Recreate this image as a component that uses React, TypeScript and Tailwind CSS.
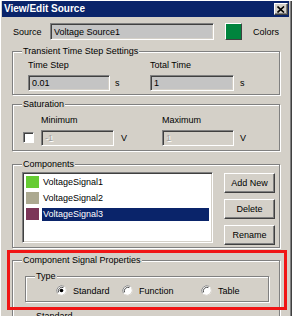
import React from "react";

const sunken =
  "border border-t-[#808080] border-l-[#808080] border-b-white border-r-white shadow-[inset_1px_1px_0_#404040,inset_-1px_-1px_0_#d4d0c8]";
const raised =
  "border border-t-white border-l-white border-b-[#404040] border-r-[#404040] shadow-[inset_-1px_-1px_0_#808080,inset_1px_1px_0_#d4d0c8]";

function Group({
  title,
  className,
  children,
}: {
  title: string;
  className?: string;
  children?: React.ReactNode;
}) {
  return (
    <div
      className={`relative border border-[#808080] shadow-[inset_1px_1px_0_#fff,1px_1px_0_#fff] ${className ?? ""}`}
    >
      <span className="absolute -top-[7px] left-[9px] bg-[#d4d0c8] px-[1px] leading-[12px]">
        {title}
      </span>
      {children}
    </div>
  );
}

function Field({
  value,
  width,
  disabled,
}: {
  value: string;
  width: string;
  disabled?: boolean;
}) {
  return (
    <div
      className={`${sunken} ${width} flex h-[16px] items-center pl-[3px] ${
        disabled
          ? "bg-[#d4d0c8] text-[#a0a0a0] [text-shadow:1px_1px_0_#fff]"
          : "bg-[#c4c4c4] text-black"
      }`}
    >
      {value}
    </div>
  );
}

function Radio({ label, checked }: { label: string; checked?: boolean }) {
  return (
    <div className="flex items-center gap-[6px]">
      <svg width="11" height="11" viewBox="0 0 12 12">
        <circle cx="6" cy="6" r="5.5" fill="#fff" />
        <path d="M1.5 9 A5.5 5.5 0 0 1 9 1.5" stroke="#808080" strokeWidth="1" fill="none" />
        <path d="M2.8 8 A4 4 0 0 1 8 2.8" stroke="#404040" strokeWidth="1" fill="none" />
        <path d="M3 10.5 A5.5 5.5 0 0 0 10.5 3" stroke="#d4d0c8" strokeWidth="1" fill="none" />
        {checked && <circle cx="6" cy="6" r="2" fill="#000" />}
      </svg>
      <span>{label}</span>
    </div>
  );
}

function Button({ label }: { label: string }) {
  return (
    <div
      className={`${raised} flex h-[20px] w-[51px] items-center justify-center bg-[#d4d0c8]`}
    >
      {label}
    </div>
  );
}

export default function App() {
  const signals = [
    { name: "VoltageSignal1", color: "bg-[#66cc33]", selected: false },
    { name: "VoltageSignal2", color: "bg-[#aca990]", selected: false },
    { name: "VoltageSignal3", color: "bg-[#7c3658]", selected: true },
  ];

  return (
    <div className="relative h-[316px] w-[292px] overflow-hidden bg-[#d4d0c8] pl-[2px] pr-[3px] pt-[1px] font-['Liberation_Sans',Arial,sans-serif] text-[9px] leading-[12px] text-black shadow-[inset_1px_1px_0_#fff,inset_-1px_0_0_#404040,inset_-2px_0_0_#808080]">
      {/* Title bar */}
      <div className="flex h-[16px] items-center justify-between bg-[#0a246a] pl-[2px] pr-[1px]">
        <span className="text-[10px] font-bold text-white">View/Edit Source</span>
        <div className={`${raised} flex h-[12px] w-[14px] items-center justify-center bg-[#d4d0c8]`}>
          <svg width="8" height="7" viewBox="0 0 8 7">
            <path d="M0.5 0.5 L7 6.5 M7 0.5 L0.5 6.5" stroke="#000" strokeWidth="1.6" />
          </svg>
        </div>
      </div>

      <div className="flex flex-col pl-[10px]">
        {/* Source row */}
        <div className="mt-[6px] flex h-[17px] items-center">
          <span className="ml-[1px] w-[37px]">Source</span>
          <Field value="Voltage Source1" width="w-[164px] h-[17px]" />
          <div className="ml-[11px] h-[17px] w-[17px] border border-t-white border-l-white border-b-[#404040] border-r-[#404040] bg-[#00843d]" />
          <span className="ml-[11px]">Colors</span>
        </div>

        {/* Transient */}
        <Group title="Transient Time Step Settings" className="mt-[11px] h-[44px] w-[268px]">
          <div className="flex pl-[15px] pt-[7px]">
            <div className="flex w-[122px] flex-col">
              <span>Time Step</span>
              <div className="mt-[4px] flex items-center gap-[5px]">
                <Field value="0.01" width="w-[82px]" />
                <span>s</span>
              </div>
            </div>
            <div className="flex flex-col">
              <span>Total Time</span>
              <div className="mt-[4px] flex items-center gap-[6px]">
                <Field value="1" width="w-[84px]" />
                <span>s</span>
              </div>
            </div>
          </div>
        </Group>

        {/* Saturation */}
        <Group title="Saturation" className="mt-[9px] h-[47px] w-[268px]">
          <div className="flex items-end pl-[10px] pt-[9px]">
            <div className="mb-[3px] h-[11px] w-[11px] border border-t-[#808080] border-l-[#808080] border-b-white border-r-white bg-white shadow-[inset_1px_1px_0_#404040]" />
            <div className="ml-[7px] flex w-[121px] flex-col">
              <span>Minimum</span>
              <div className="mt-[4px] flex items-center gap-[7px]">
                <Field value="-1" width="w-[73px]" disabled />
                <span>V</span>
              </div>
            </div>
            <div className="flex flex-col">
              <span>Maximum</span>
              <div className="mt-[4px] flex items-center gap-[6px]">
                <Field value="1" width="w-[72px]" disabled />
                <span>V</span>
              </div>
            </div>
          </div>
        </Group>

        {/* Components */}
        <Group title="Components" className="mt-[13px] h-[84px] w-[268px]">
          <div className="flex pl-[9px] pt-[7px]">
            <div className={`${sunken} h-[71px] w-[191px] bg-white pl-[3px] pt-[1px]`}>
              {signals.map((s) => (
                <div key={s.name} className="flex h-[16px] items-center">
                  <div className={`${s.color} h-[12px] w-[13px]`} />
                  <span
                    className={`ml-[3px] flex h-[13px] items-center pl-[1px] ${
                      s.selected ? "w-[167px] bg-[#0a246a] text-white" : ""
                    }`}
                  >
                    {s.name}
                  </span>
                </div>
              ))}
            </div>
            <div className="ml-[11px] flex flex-col gap-[6px] pt-[1px]">
              <Button label="Add New" />
              <Button label="Delete" />
              <Button label="Rename" />
            </div>
          </div>
        </Group>

        {/* Component Signal Properties */}
        <Group title="Component Signal Properties" className="mt-[12px] h-[80px] w-[268px]">
          <Group title="Type" className="ml-[12px] mt-[15px] h-[26px] w-[244px]">
            <div className="flex h-full items-center pl-[30px] pt-[3px]">
              <div className="w-[66px]">
                <Radio label="Standard" checked />
              </div>
              <div className="w-[79px]">
                <Radio label="Function" />
              </div>
              <Radio label="Table" />
            </div>
          </Group>
          <Group title="Standard" className="ml-[12px] mt-[14px] h-[30px] w-[244px]" />
        </Group>
      </div>

      {/* Highlight annotation */}
      <div className="absolute left-[7px] top-[250px] h-[60px] w-[280px] border-[3px] border-[#f01515]" />
    </div>
  );
}
